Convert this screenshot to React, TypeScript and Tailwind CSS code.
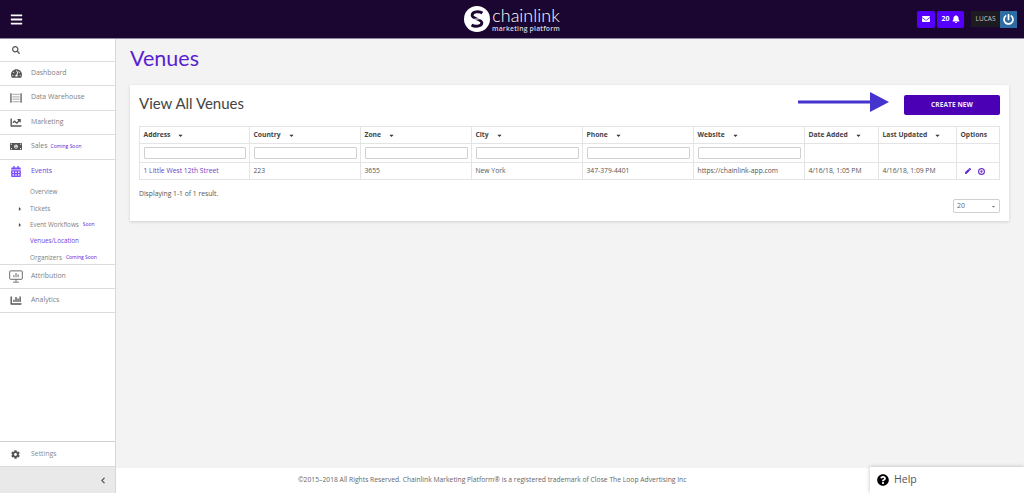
import { FaBars, FaSearch, FaTachometerAlt, FaChartLine, FaMoneyBillAlt, FaCalendarAlt, FaChartBar, FaCog, FaChevronLeft, FaEnvelope, FaBell, FaPowerOff, FaPen, FaCaretDown, FaCaretRight, FaQuestionCircle, FaChevronDown } from "react-icons/fa";

const WarehouseIcon = () => (
  <svg viewBox="0 0 20 16" className="w-[12px] h-[10px] text-[#8a8a8a]" fill="currentColor">
    <path d="M0 0h3v16H0zM17 0h3v16h-3z" />
    <path d="M4 1h12v2H4zM4 5h12v2H4zM4 9h12v2H4zM4 13h12v2H4z" opacity="0.6" />
  </svg>
);

const AttributionIcon = () => (
  <svg viewBox="0 0 20 18" className="w-[14px] h-[13px] text-[#666]" fill="none" stroke="currentColor" strokeWidth="1.4">
    <rect x="1" y="1" width="18" height="12" rx="1" />
    <path d="M10 13v3M6 17h8M7 10V7M10 10V4M13 10V6" />
  </svg>
);

const navTop = [
  { icon: <FaTachometerAlt className="w-[11px] h-[11px] text-[#555]" />, label: "Dashboard" },
  { icon: <WarehouseIcon />, label: "Data Warehouse" },
  { icon: <FaChartLine className="w-[12px] h-[11px] text-[#555]" />, label: "Marketing" },
  { icon: <FaMoneyBillAlt className="w-[12px] h-[11px] text-[#555]" />, label: "Sales", soon: "Coming Soon" },
];

const subNav = [
  { label: "Overview" },
  { label: "Tickets", arrow: true },
  { label: "Event Workflows", arrow: true, soon: "Soon" },
  { label: "Venues/Location", active: true },
  { label: "Organizers", soon: "Coming Soon" },
];

const columns = [
  { label: "Address", w: "w-[110px]", filter: true },
  { label: "Country", w: "w-[111px]", filter: true },
  { label: "Zone", w: "w-[111px]", filter: true },
  { label: "City", w: "w-[111px]", filter: true },
  { label: "Phone", w: "w-[111px]", filter: true },
  { label: "Website", w: "w-[111px]", filter: true },
  { label: "Date Added", w: "w-[74px]", filter: false },
  { label: "Last Updated", w: "w-[78px]", filter: false },
  { label: "Options", w: "w-[43px]", filter: false, noSort: true },
];

const cellValues = ["223", "3655", "New York", "347-379-4401", "https://chainlink-app.com", "4/16/18, 1:05 PM", "4/16/18, 1:09 PM"];

const NavRow = ({ icon, label, soon }: { icon: React.ReactNode; label: string; soon?: string }) => (
  <div className="h-[24.4px] flex items-center border-b border-[#dcdcdc] shrink-0">
    <div className="w-[31px] flex justify-center pl-[1px]">{icon}</div>
    <span className="text-[6.9px] text-[#808080] mb-[1px]">{label}</span>
    {soon && <span className="ml-[3px] text-[5px] text-[#5b21d6]">{soon}</span>}
  </div>
);

export default function App() {
  return (
    <div className="h-screen w-full overflow-hidden flex flex-col bg-[#f3f3f3] font-['Open_Sans',sans-serif] relative">
      {/* Top bar */}
      <header className="h-[39px] shrink-0 bg-[#1a0630] border-b border-[#8f86a0] flex items-center pl-[10px] pr-[7px] relative">
        <FaBars className="w-[13px] h-[13px] text-white" />
        <div className="flex-1 flex justify-center pl-[84px]">
          <div className="flex items-center gap-[2px]">
            <svg viewBox="0 0 24 24" className="w-[26px] h-[26px]">
              <circle cx="12" cy="12" r="12" fill="#fff" />
              <path d="M17 6.5C14 4.5 7.5 5 7.5 8.5c0 3.5 9 3.5 9 7 0 3.5-6.5 4-9.5 2" fill="none" stroke="#1a0630" strokeWidth="2.6" />
              <path d="M8 12.5l8-1" stroke="#fff" strokeWidth="1" />
            </svg>
            <div className="flex flex-col items-center text-white">
              <span className="font-['Lato',sans-serif] font-light text-[18px] leading-[18px]">chainlink</span>
              <span className="font-['Open_Sans',sans-serif] font-semibold text-[6.8px] leading-[9px] text-[#d8d4dd] tracking-[0.2px]">marketing platform</span>
            </div>
          </div>
        </div>
        <div className="flex items-center">
          <div className="w-[18px] h-[17px] rounded-[2px] bg-[#5500ff] flex items-center justify-center">
            <FaEnvelope className="w-[8px] h-[8px] text-white" />
          </div>
          <div className="ml-[2px] w-[27px] h-[17px] rounded-[2px] bg-[#5500ff] flex items-center justify-center gap-[2px]">
            <span className="text-[7px] font-bold text-white">20</span>
            <FaBell className="w-[8px] h-[8px] text-white" />
          </div>
          <div className="ml-[7px] w-[29px] h-[16px] bg-[#1e1a22] flex items-center justify-center">
            <span className="text-[6.5px] text-[#c8c8c8]">LUCAS</span>
          </div>
          <div className="w-[17px] h-[17px] bg-[#2d6da3] flex items-center justify-center">
            <FaPowerOff className="w-[11px] h-[11px] text-white" />
          </div>
        </div>
      </header>

      <div className="flex-1 flex min-h-0">
        {/* Sidebar */}
        <aside className="w-[116px] shrink-0 bg-white border-r border-[#d8d8d8] flex flex-col">
          <div className="h-[23px] shrink-0 flex items-center pl-[12px] border-b border-[#dcdcdc]">
            <FaSearch className="w-[8px] h-[8px] text-[#555]" />
          </div>
          {navTop.map((item) => (
            <NavRow key={item.label} icon={item.icon} label={item.label} soon={item.soon} />
          ))}
          <div className="h-[105px] shrink-0 border-b border-[#dcdcdc]">
            <div className="h-[24px] flex items-center">
              <div className="w-[31px] flex justify-center pl-[1px]">
                <FaCalendarAlt className="w-[10px] h-[11px] text-[#7c4dff]" />
              </div>
              <span className="text-[6.9px] text-[#6d3fe0] mb-[1px]">Events</span>
            </div>
            <div className="flex flex-col pt-[0.5px]">
              {subNav.map((s) => (
                <div key={s.label} className="h-[16.3px] flex items-center relative pl-[30px]">
                  {s.arrow && <FaCaretRight className="absolute left-[17px] w-[6px] h-[6px] text-[#555]" />}
                  <span className={s.active ? "text-[6.3px] text-[#6d3fe0]" : "text-[6.3px] text-[#808080]"}>{s.label}</span>
                  {s.soon && <span className="ml-[4px] text-[5px] text-[#5b21d6]">{s.soon}</span>}
                </div>
              ))}
            </div>
          </div>
          <NavRow icon={<AttributionIcon />} label="Attribution" />
          <NavRow icon={<FaChartBar className="w-[12px] h-[11px] text-[#555]" />} label="Analytics" />
          <div className="flex-1" />
          <div className="h-[25px] shrink-0 flex items-center border-t border-[#cfcfcf]">
            <div className="w-[31px] flex justify-center">
              <FaCog className="w-[9px] h-[9px] text-[#555]" />
            </div>
            <span className="text-[6.9px] text-[#8c8c8c]">Settings</span>
          </div>
          <div className="h-[27px] shrink-0 bg-[#e9e9e9] border-t border-[#dcdcdc] flex items-center justify-end pr-[9px]">
            <FaChevronLeft className="w-[6px] h-[7px] text-[#555]" />
          </div>
        </aside>

        {/* Main */}
        <main className="flex-1 min-w-0 flex flex-col">
          <div className="flex-1 pl-[14px] pr-[15px] pt-[6px]">
            <h1 className="font-['Lato',sans-serif] font-normal text-[21.5px] leading-[27px] text-[#5a1fd0]">Venues</h1>
            <section className="mt-[13px] h-[136px] bg-white shadow-[0_1px_3px_rgba(0,0,0,0.15)] pl-[9px] pr-[9px]">
              <div className="h-[41px] flex items-center justify-between">
                <h2 className="font-['Lato',sans-serif] font-normal text-[15px] text-[#444] mb-[4px]">View All Venues</h2>
                <div className="flex items-center">
                  <svg viewBox="0 0 92 20" className="w-[92px] h-[20px] mr-[14px] mt-[-8px]">
                    <path d="M0 8.5h72v3H0z" fill="#4433cc" />
                    <path d="M72 0l19 10-19 10z" fill="#4433cc" />
                  </svg>
                  <button className="w-[96px] h-[20px] rounded-[2px] bg-[#4b00b5] text-[#f0e8ff] text-[6.5px] font-bold tracking-[0.1px] mt-[-1px]">CREATE NEW</button>
                </div>
              </div>
              <table className="table-fixed border-collapse w-[860px] text-[6.75px] text-[#555]">
                <thead>
                  <tr className="h-[17px]">
                    {columns.map((c) => (
                      <th key={c.label} className={`${c.w} border border-[#e4e4e4] text-left font-bold text-[#444] px-[3.5px] py-0`}>
                        <span className="inline-flex items-center">
                          {c.label}
                          {!c.noSort && <FaCaretDown className="ml-[7px] w-[7px] h-[7px] text-[#333]" />}
                        </span>
                      </th>
                    ))}
                  </tr>
                  <tr className="h-[19px]">
                    {columns.map((c) => (
                      <th key={c.label} className="border border-[#e4e4e4] px-[3.5px] py-0">
                        {c.filter && <input className="block w-full h-[12px] bg-white border border-[#d0d0d0] rounded-[1px]" />}
                      </th>
                    ))}
                  </tr>
                </thead>
                <tbody>
                  <tr className="h-[17px]">
                    <td className="border border-[#e4e4e4] px-[3.5px] py-0 text-[#6d3fc4] whitespace-nowrap">1 Little West 12th Street</td>
                    {cellValues.map((v) => (
                      <td key={v} className="border border-[#e4e4e4] px-[3.5px] py-0 whitespace-nowrap overflow-hidden">{v}</td>
                    ))}
                    <td className="border border-[#e4e4e4] px-[3.5px] py-0">
                      <div className="flex items-center gap-[7px] pl-[4px]">
                        <FaPen className="w-[6px] h-[6px] text-[#5b21d6]" />
                        <svg viewBox="0 0 12 12" className="w-[7px] h-[7px]">
                          <circle cx="6" cy="6" r="5" fill="none" stroke="#6a35c9" strokeWidth="2" />
                          <circle cx="6" cy="6" r="2" fill="#6a35c9" />
                        </svg>
                      </div>
                    </td>
                  </tr>
                </tbody>
              </table>
              <div className="flex justify-between items-start">
                <p className="text-[6.75px] text-[#555] mt-[9px]">Displaying 1-1 of 1 result.</p>
                <div className="mt-[19px] w-[47px] h-[14px] border border-[#cfcfcf] rounded-[2px] flex items-center justify-between px-[3px]">
                  <span className="text-[7px] text-[#666]">20</span>
                  <FaCaretDown className="w-[5px] h-[5px] text-[#777]" />
                </div>
              </div>
            </section>
          </div>
          <footer className="h-[25px] shrink-0 bg-white flex items-center pl-[182px]">
            <span className="text-[6.75px] text-[#666]">©2015–2018 All Rights Reserved. Chainlink Marketing Platform® is a registered trademark of Close The Loop Advertising Inc</span>
          </footer>
        </main>
      </div>

      <div className="absolute right-0 bottom-0 w-[154px] h-[26px] bg-white shadow-[0_0_4px_rgba(0,0,0,0.25)] flex items-center pl-[7px]">
        <FaQuestionCircle className="w-[12px] h-[12px] text-black" />
        <span className="ml-[5px] text-[10.5px] text-[#555]">Help</span>
      </div>
    </div>
  );
}
